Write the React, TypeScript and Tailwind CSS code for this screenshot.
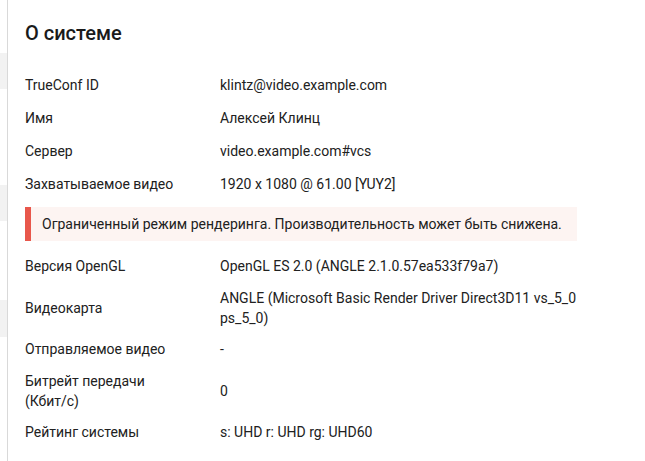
import React from "react";

const first = [
  ["TrueConf ID", "klintz@video.example.com"],
  ["Имя", "Алексей Клинц"],
  ["Сервер", "video.example.com#vcs"],
  ["Захватываемое видео", "1920 x 1080 @ 61.00 [YUY2]"],
];

const second: [string, string, boolean][] = [
  ["Версия OpenGL", "OpenGL ES 2.0 (ANGLE 2.1.0.57ea533f79a7)", false],
  ["Видеокарта", "ANGLE (Microsoft Basic Render Driver Direct3D11 vs_5_0 ps_5_0)", true],
  ["Отправляемое видео", "-", false],
  ["Битрейт передачи (Кбит/с)", "0", true],
  ["Рейтинг системы", "s: UHD r: UHD rg: UHD60", false],
];

export default function App() {
  return (
    <div
      className="flex h-[461px] w-[645px] overflow-hidden bg-white text-[14px] leading-[20px] text-[#212121]"
      style={{ fontFamily: "Roboto, 'Noto Sans', sans-serif" }}
    >
      <div className="flex w-[8px] shrink-0 flex-col border-r border-[#d9d9d9] bg-white">
        <div className="h-[53px]" />
        <div className="h-[36px] bg-[#f2f2f2]" />
        <div className="h-[96px]" />
        <div className="h-[36px] bg-[#f2f2f2]" />
        <div className="h-[79px]" />
        <div className="h-[37px] bg-[#f2f2f2]" />
      </div>
      <div className="flex flex-1 flex-col pl-[17px]">
        <h1 className="mt-[21px] text-[20px] font-medium leading-[24px] text-[#1a1a1a]">О системе</h1>
        <div className="mt-[23px] flex flex-col">
          {first.map(([k, v]) => (
            <div key={k} className="flex h-[33px] items-center">
              <div className="w-[195px] shrink-0">{k}</div>
              <div>{v}</div>
            </div>
          ))}
        </div>
        <div className="mt-[7px] flex h-[34px] w-[552px] items-center bg-[#fdf4f2]">
          <div className="h-full w-[6px] bg-[#e8574b]" />
          <div className="pl-[11px]">Ограниченный режим рендеринга. Производительность может быть снижена.</div>
        </div>
        <div className="mt-[9px] flex flex-col">
          {second.map(([k, v, two]) => (
            <div key={k} className={`flex items-center ${two ? "h-[51px]" : "h-[32px]"}`}>
              <div className="w-[195px] shrink-0 pr-[40px]">{k}</div>
              <div className="w-[360px]">{v}</div>
            </div>
          ))}
        </div>
      </div>
    </div>
  );
}
